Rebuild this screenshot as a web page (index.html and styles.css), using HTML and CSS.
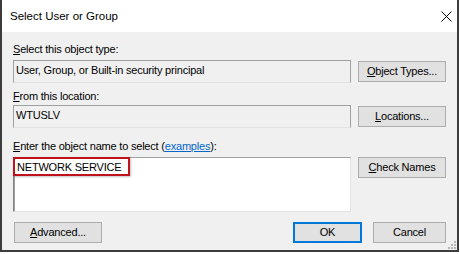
FILE: index.html
```html
<!DOCTYPE html>
<html lang="en">
<head>
    <meta charset="UTF-8">
    <title>Select User or Group</title>
    <link rel="stylesheet" href="styles.css">
</head>
<body>
    <div class="window">
        <div class="titlebar">
            <span class="title">Select User or Group</span>
            <svg class="close" width="11" height="11" viewBox="0 0 11 11">
                <path d="M0.5 0.5 L10.5 10.5 M10.5 0.5 L0.5 10.5" stroke="#000" stroke-width="1" fill="none"/>
            </svg>
        </div>
        <div class="content">
            <div class="label label-first"><u>S</u>elect this object type:</div>
            <div class="row">
                <div class="field">User, Group, or Built-in security principal</div>
                <div class="button"><u>O</u>bject Types...</div>
            </div>

            <div class="label label-second"><u>F</u>rom this location:</div>
            <div class="row row-second">
                <div class="field">WTUSLV</div>
                <div class="button"><u>L</u>ocations...</div>
            </div>

            <div class="label label-third"><u>E</u>nter the object name to select (<span class="link">examples</span>):</div>
            <div class="row row-top">
                <div class="editbox">
                    <span class="highlight">NETWORK SERVICE</span>
                </div>
                <div class="button"><u>C</u>heck Names</div>
            </div>

            <div class="footer">
                <div class="button button-advanced"><u>A</u>dvanced...</div>
                <div class="button button-ok">OK</div>
                <div class="button button-cancel">Cancel</div>
            </div>
        </div>
        <svg class="grip" width="8" height="8" viewBox="0 0 8 8">
            <rect x="6" y="0" width="2" height="2" fill="#b8b8b8"/>
            <rect x="3" y="3" width="2" height="2" fill="#b8b8b8"/>
            <rect x="6" y="3" width="2" height="2" fill="#b8b8b8"/>
            <rect x="0" y="6" width="2" height="2" fill="#b8b8b8"/>
            <rect x="3" y="6" width="2" height="2" fill="#b8b8b8"/>
            <rect x="6" y="6" width="2" height="2" fill="#b8b8b8"/>
        </svg>
    </div>
</body>
</html>
```

FILE: styles.css
```css
body {
    margin: 0;
    padding: 0;
    background-color: #ffffff;
    font-family: "Liberation Sans", Arial, sans-serif;
    font-size: 11px;
    color: #000000;
}

.window {
    position: relative;
    box-sizing: border-box;
    width: 459px;
    height: 252px;
    background-color: #f0f0f0;
    border-left: 2px solid #3c3c3c;
    border-right: 2px solid #3c3c3c;
    border-bottom: 2px solid #3c3c3c;
}

.titlebar {
    display: flex;
    align-items: center;
    height: 32px;
    padding-left: 8px;
    padding-right: 5px;
    background-color: #ffffff;
}

.title {
    font-size: 11.5px;
    line-height: 14px;
}

.close {
    margin-left: auto;
    margin-top: 1px;
}

.content {
    padding: 0 11px 0 11px;
    letter-spacing: -0.2px;
}

.label {
    line-height: 14px;
    height: 14px;
    white-space: nowrap;
}

.label-first {
    margin-top: 10px;
}

.label-second {
    margin-top: 6px;
}

.label-third {
    margin-top: 11px;
}

.link {
    color: #0066cc;
    text-decoration: underline;
}

.row {
    display: flex;
    align-items: center;
    gap: 7px;
    margin-top: 4px;
}

.row-second {
    margin-top: 2px;
}

.row-top {
    align-items: flex-start;
}

.field {
    box-sizing: border-box;
    width: 338px;
    height: 23px;
    padding: 2px 2px 0 2px;
    line-height: 14px;
    background-color: #f0f0f0;
    border: 1px solid;
    border-color: #a0a0a0 #a0a0a0 #e3e3e3 #a0a0a0;
    white-space: nowrap;
}

.editbox {
    position: relative;
    box-sizing: border-box;
    width: 338px;
    height: 55px;
    background-color: #ffffff;
    border: 1px solid;
    border-color: #a0a0a0 #e3e3e3 #e3e3e3 #828282;
    box-shadow: inset 1px 0 0 #a0a0a0;
}

.highlight {
    position: absolute;
    left: -1px;
    top: -1px;
    box-sizing: border-box;
    width: 117px;
    height: 19px;
    padding: 1px 0 0 2px;
    line-height: 14px;
    border: 2px solid #c0121c;
    box-shadow: 1px 1px 2px rgba(0, 0, 0, 0.25);
    white-space: nowrap;
}

.button {
    box-sizing: border-box;
    width: 88px;
    height: 21px;
    line-height: 19px;
    text-align: center;
    background-color: #e1e1e1;
    border: 1px solid #adadad;
    white-space: nowrap;
}

.footer {
    display: flex;
    margin-top: 10px;
}

.button-advanced {
    margin-left: 1px;
}

.button-ok {
    margin-left: auto;
    width: 69px;
    line-height: 17px;
    border: 2px solid #0078d7;
}

.button-cancel {
    margin-left: 11px;
    width: 73px;
}

.grip {
    position: absolute;
    right: 1px;
    bottom: 1px;
}
```
